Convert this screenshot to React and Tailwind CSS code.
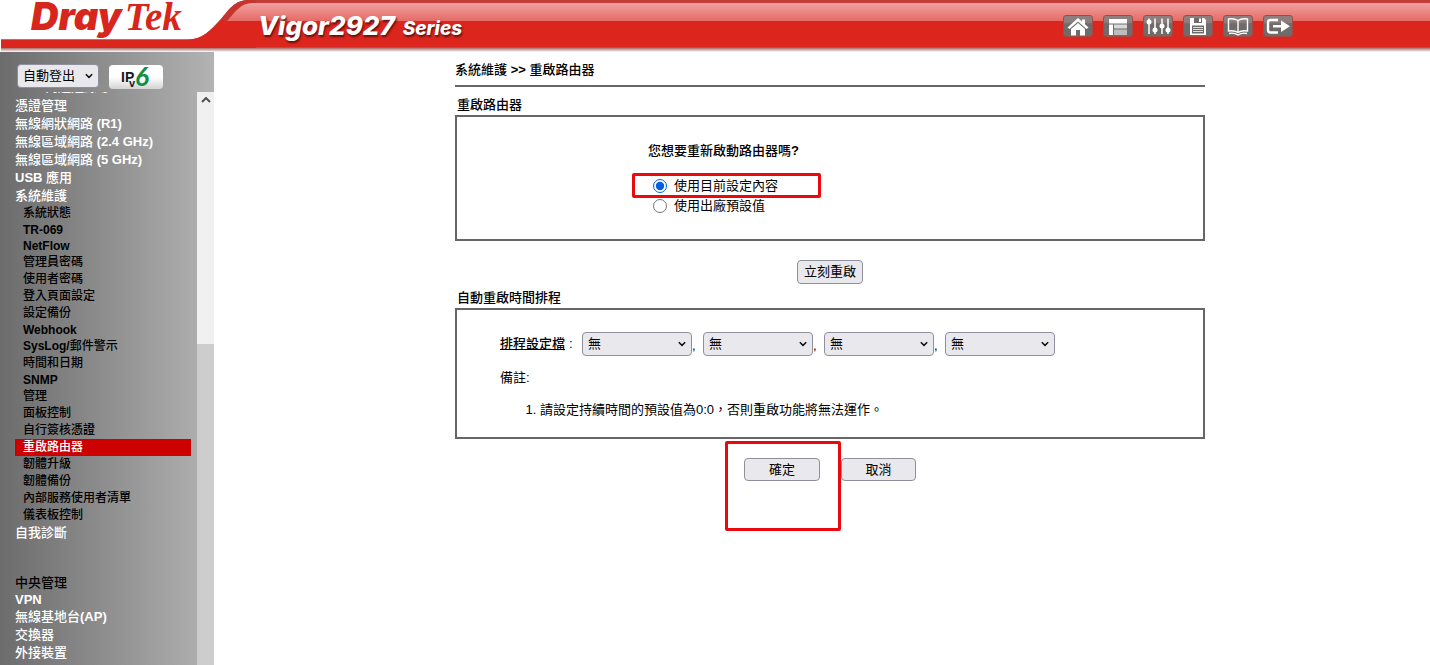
import React from "react";

const mainTop = [
  "憑證管理",
  "無線網狀網路 (R1)",
  "無線區域網路 (2.4 GHz)",
  "無線區域網路 (5 GHz)",
  "USB 應用",
  "系統維護",
];
const sub = [
  "系統狀態",
  "TR-069",
  "NetFlow",
  "管理員密碼",
  "使用者密碼",
  "登入頁面設定",
  "設定備份",
  "Webhook",
  "SysLog/郵件警示",
  "時間和日期",
  "SNMP",
  "管理",
  "面板控制",
  "自行簽核憑證",
  "重啟路由器",
  "韌體升級",
  "韌體備份",
  "內部服務使用者清單",
  "儀表板控制",
];
const mainBottom = ["無線基地台(AP)", "交換器", "外接裝置"];
const isLatin = (s) => /^[\x00-\x7f]+$/.test(s);

// Latin runs are bold, Chinese runs medium.
function Mixed({ text }) {
  return text
    .split(/([\x00-\x7f]+)/)
    .filter(Boolean)
    .map((run, i) => (isLatin(run) ? <b key={i} className="font-bold">{run}</b> : <React.Fragment key={i}>{run}</React.Fragment>));
}

function Chevron({ className }) {
  return (
    <svg viewBox="0 0 8 6" className={className} fill="none" stroke="#111" strokeWidth="1.5" aria-hidden="true">
      <path d="M0.8 1.2 4 4.4 7.2 1.2" />
    </svg>
  );
}

function Select({ label, width, value }) {
  return (
    <span className={"relative inline-flex items-center " + width}>
      <select
        aria-label={label}
        className="h-6 w-full appearance-none rounded border border-[#8f8f9d] bg-[#e9e9ed] pl-[5px] text-[13px] leading-4 text-black"
      >
        <option>{value}</option>
      </select>
      <Chevron className="pointer-events-none absolute right-[6px] h-[6px] w-2" />
    </span>
  );
}

function ToolButton({ label, children }) {
  return (
    <button
      type="button"
      aria-label={label}
      className="h-[22px] w-[30px] rounded-[3px] border border-[#a34a45] bg-linear-to-b from-[#8c7f7e] from-30% to-[#6f6b6a] to-40%"
    >
      <svg viewBox="0 0 28 20" className="block h-5 w-7" aria-hidden="true">
        {children}
      </svg>
    </button>
  );
}

function Header() {
  return (
    <header className="flex h-[52px] items-start">
      <div className="relative h-[52px] w-[256px] shrink-0">
        <svg viewBox="0 0 256 52" className="block h-[52px] w-[256px]" aria-hidden="true">
          <defs>
            <linearGradient id="gloss" gradientUnits="userSpaceOnUse" x1="0" y1="3" x2="0" y2="21">
              <stop offset="0" stopColor="#f0a29f" />
              <stop offset="1" stopColor="#e66a66" />
            </linearGradient>
            <linearGradient id="shade" gradientUnits="userSpaceOnUse" x1="0" y1="48" x2="0" y2="52">
              <stop offset="0" stopColor="#a9716e" />
              <stop offset="1" stopColor="#ffffff" />
            </linearGradient>
          </defs>
          <rect x="1" y="48" width="255" height="4" fill="url(#shade)" />
          <path d="M1 39.500H188C202 39.500 210 31 221 19C229 10 234 0 249 0H256V48H1Z" fill="#dc251d" />
          <path d="M221 19C229 10 234 0 249 0H256V3H250C241 4 235 12 227 21Z" fill="#c4352f" />
          <path d="M227 21C235 12 241 3 252 3H256V21Z" fill="url(#gloss)" />
          <path d="M1 40H188C202 40 210 31.500 221 19.500" fill="none" stroke="#c4352f" />
        </svg>
        <div className="absolute top-0 left-[31px] flex items-baseline gap-[3px] leading-8 text-[#d9261d]">
          <span className="font-['Inter'] text-[38px] font-black italic">Dray</span>
          <span className="font-['Liberation_Serif'] text-[39px] font-bold italic">Tek</span>
        </div>
      </div>
      <div className="flex h-[52px] flex-1 items-start bg-[linear-gradient(to_bottom,#bf3d37_0px,#c8403a_3px,#f0a29f_3px,#e66a66_21px,#dc251d_21px,#dc251d_47px,#a9716e_48px,#ffffff_52px)] pr-[137px]">
        <h1 className="flex items-baseline gap-2 pt-[10px] pl-[2px] font-['Inter'] leading-8 font-extrabold text-white italic [text-shadow:1px_2px_2px_#5d1410]">
          <span className="text-[26px]">Vigor2927</span>
          <span className="text-[19px]">Series</span>
        </h1>
        <nav className="mt-[15px] ml-auto flex gap-[10px]">
          <ToolButton label="Home">
            <path d="M14 2 3.500 11.500 5.500 13 14 5.500 22.500 13 24.500 11.500 21 8.200V3.500H18V5.500Z" fill="#fff" />
            <path d="M14 7 7 13V19.500H12V14H16V19.500H21V13Z" fill="#fff" />
          </ToolButton>
          <ToolButton label="Layout">
            <path d="M5 3H23V7.500H5ZM5 8.500H9V19H5Z" fill="#fff" />
            <path d="M10 8.500H23V12.500H10Z" fill="#d8d8d8" />
            <path d="M10 13.500H23V19H10Z" fill="#bdbdbd" />
          </ToolButton>
          <ToolButton label="Settings">
            <path d="M5 2.500V18M11 2.500V18M18 2.500V18M24 2.500V18" stroke="#fff" strokeWidth="1.500" />
            <g fill="#fff">
              <circle cx="5" cy="6" r="2.500" />
              <circle cx="11" cy="14" r="2.500" />
              <circle cx="18" cy="10" r="2.500" />
              <circle cx="24" cy="14" r="2.500" />
            </g>
          </ToolButton>
          <ToolButton label="Save">
            <path d="M6 2H20L22 4V19H6Z" fill="#fff" />
            <path d="M10 2H18V7H10Z" fill="#6f6b6a" />
            <path d="M15 2.500H17V6H15Z" fill="#fff" />
            <path d="M8 9.500H20V17.500H8Z" fill="#6f6b6a" />
            <path d="M9 11.500H19M9 13.500H19M9 15.500H19" stroke="#ddd" />
          </ToolButton>
          <ToolButton label="Manual">
            <path d="M14 4.500C11 2.500 8 2.500 4.500 3V15C8 14.500 11 14.500 14 16.500C17 14.500 20 14.500 23.500 15V3C20 2.500 17 2.500 14 4.500ZM14 4.500V16.500M5 17.500C9 16.500 11 17 14 19C17 17 19 16.500 23 17.500" fill="none" stroke="#fff" strokeWidth="1.400" />
          </ToolButton>
          <ToolButton label="Logout">
            <path d="M14 4H6.500Q4 4 4 6.500V14Q4 16.500 6.500 16.500H14" fill="none" stroke="#fff" strokeWidth="2.400" />
            <path d="M9 9H17V4.500L26 10.200 17 16V11.500H9Z" fill="#fff" />
          </ToolButton>
        </nav>
      </div>
    </header>
  );
}

function MenuLink({ children, dark }) {
  return (
    <a href="#menu" className={"block pl-[15px] " + (isLatin(children) ? "leading-4 " : "leading-[18px] ") + (dark ? "text-black" : "text-white")}>
      <Mixed text={children} />
    </a>
  );
}

function Sidebar() {
  return (
    <aside className="flex w-[214px] shrink-0 flex-col bg-linear-to-r from-[#6c6c6c] to-[#b3b3b3]">
      <div className="flex h-10 shrink-0 items-start gap-[10px] pt-3 pl-[17px]">
        <Select label="自動登出" value="自動登出" width="w-[82px]" />
        <a href="#ipv6" aria-label="IPv6" className="mt-px h-6 w-[54px] rounded bg-linear-to-b from-white from-50% to-[#d4d4d4]">
          <svg viewBox="0 0 54 24" className="block h-6 w-[54px]" aria-hidden="true">
            <text x="12" y="17" fontFamily="Liberation Sans" fontSize="14" fontWeight="700" fill="#1a1a1a">IP</text>
            <text x="20" y="22" fontFamily="Liberation Sans" fontSize="11" fontWeight="700" fill="#1a1a1a">v</text>
            <text x="26" y="21" fontFamily="Lato" fontSize="26" fontWeight="700" fontStyle="italic" fill="#0b8f43">6</text>
          </svg>
        </a>
      </div>
      <div className="flex flex-1">
        <nav className="w-[197px] overflow-hidden text-[13px] font-medium">
          <div className="h-[5px] overflow-hidden">
            <a href="#menu" className="-mt-[13px] block pl-[45px] leading-4 text-white">內超連線等</a>
          </div>
          {mainTop.map((t) => (
            <a key={t} href="#menu" className="block pl-[15px] leading-[18px] text-white">
              <Mixed text={t} />
            </a>
          ))}
          <ul className="text-xs font-medium">
            {sub.map((t) => (
              <li key={t} className={"mr-[6px] ml-[15px] pl-2 " + (isLatin(t) ? "leading-4 " : "leading-[17px] ") + (t === "重啟路由器" ? "bg-[#cc0000] text-white" : "text-black")}>
                <a href="#menu" className="block">
                  <Mixed text={t} />
                </a>
              </li>
            ))}
          </ul>
          <MenuLink>自我診斷</MenuLink>
          <div className="h-8" />
          <MenuLink dark>中央管理</MenuLink>
          <MenuLink>VPN</MenuLink>
          {mainBottom.map((t) => <MenuLink key={t}>{t}</MenuLink>)}
        </nav>
        <div className="flex flex-1 flex-col bg-[#cdcdcd]" aria-hidden="true">
          <div className="h-[252px] bg-[#f0f0f0] pt-[5px]">
            <svg viewBox="0 0 10 6" className="mx-auto h-[6px] w-[10px]" fill="none" stroke="#505050" strokeWidth="2">
              <path d="M1 5 5 1 9 5" />
            </svg>
          </div>
        </div>
      </div>
    </aside>
  );
}

const button = "rounded border border-[#8f8f9d] bg-[#e9e9ed] text-black ";
const panel = "border-2 border-[#666] ";
const highlight = "rounded-[2px] border-[3px] border-[#ea0a0d] ";

export default function App() {
  return (
    <div className="flex min-h-screen flex-col bg-white font-['Liberation_Sans','Noto_Sans_CJK_TC',sans-serif] text-[13px] leading-4 text-black">
      <Header />
      <div className="flex flex-1">
        <Sidebar />
        <main className="min-w-0 flex-1 pt-2 pl-4">
          <div className="mx-auto w-[750px] max-w-full">
            <h2 className="border-b-2 border-[#666] pt-[2px] pb-[7px] font-medium">
              系統維護 <b>&gt;&gt;</b> 重啟路由器
            </h2>
            <form>
              <h3 className="pt-[10px] pb-[2px] pl-[2px] font-medium">重啟路由器</h3>
              <section className={panel + "h-[126px] pt-[26px] pl-[191px]"}>
                <p className="font-medium">您想要重新啟動路由器嗎<b>?</b></p>
                <div className={highlight + "mt-[14px] -ml-4 flex h-[25px] w-[189px] items-center pl-[18px]"}>
                  <input id="current" name="mode" type="radio" defaultChecked className="m-0 h-[14px] w-[14px] accent-[#0060df]" />
                  <label htmlFor="current" className="pl-[7px]">使用目前設定內容</label>
                </div>
                <div className="flex items-center pl-[5px]">
                  <input id="factory" name="mode" type="radio" className="m-0 h-[14px] w-[14px]" />
                  <label htmlFor="factory" className="pl-[7px]">使用出廠預設值</label>
                </div>
              </section>
              <div className="flex justify-center pt-[19px]">
                <button type="button" className={button + "h-6 w-[66px]"}>立刻重啟</button>
              </div>
              <h3 className="pt-[6px] pb-[2px] pl-[2px] font-medium">自動重啟時間排程</h3>
              <section className={panel + "h-[131px] pt-[22px] pl-[43px]"}>
                <div className="flex items-center">
                  <a href="#schedule" className="font-medium underline">排程設定檔</a>
                  <span className="w-[17px] pl-1">:</span>
                  {[1, 2, 3, 4].map((n) => (
                    <React.Fragment key={n}>
                      <Select label={"排程設定檔 " + n} value="無" width="w-[110px]" />
                      {n < 4 && <span className="w-[11px] pt-1">,</span>}
                    </React.Fragment>
                  ))}
                </div>
                <p className="pt-[14px]">備註:</p>
                <ol className="list-decimal pt-4 pl-10">
                  <li>請設定持續時間的預設值為0:0，否則重啟功能將無法運作。</li>
                </ol>
              </section>
              <div className="flex items-start pt-[2px] pl-[270px]">
                <div className={highlight + "h-[90px] w-[116px] pt-[14px] pl-4"}>
                  <button type="submit" className={button + "block h-[23px] w-[76px]"}>確定</button>
                </div>
                <button type="reset" className={button + "mt-[17px] h-[23px] w-[75px]"}>取消</button>
              </div>
            </form>
          </div>
        </main>
      </div>
    </div>
  );
}
